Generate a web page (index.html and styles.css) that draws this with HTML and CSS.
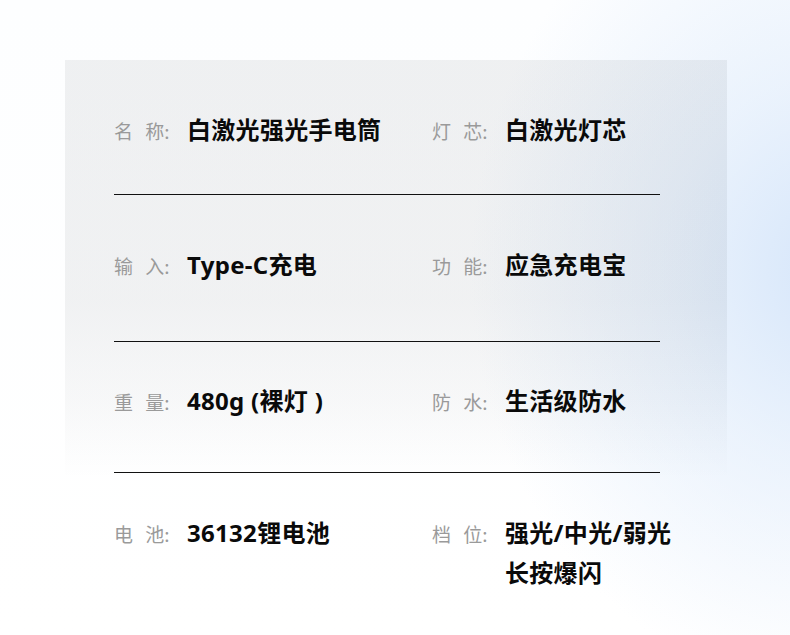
FILE: index.html
```html
<!DOCTYPE html>
<html lang="zh-CN">
<head>
<meta charset="utf-8">
<title>产品参数</title>
<link rel="stylesheet" href="styles.css">
</head>
<body>
<main class="page">
  <section class="spec-card">
    <div class="spec-row r1">
      <div class="item"><span class="key">名 称:</span><span class="val">白激光强光手电筒</span></div>
      <div class="item"><span class="key">灯 芯:</span><span class="val">白激光灯芯</span></div>
    </div>
    <div class="spec-row r2">
      <div class="item"><span class="key">输 入:</span><span class="val">Type-C充电</span></div>
      <div class="item"><span class="key">功 能:</span><span class="val">应急充电宝</span></div>
    </div>
    <div class="spec-row r3">
      <div class="item"><span class="key">重 量:</span><span class="val">480g (裸灯 )</span></div>
      <div class="item"><span class="key">防 水:</span><span class="val">生活级防水</span></div>
    </div>
    <div class="spec-row r4">
      <div class="item"><span class="key">电 池:</span><span class="val">36132锂电池</span></div>
      <div class="item"><span class="key">档 位:</span><span class="val">强光/中光/弱光<br>长按爆闪</span></div>
    </div>
  </section>
</main>
</body>
</html>
```
FILE: styles.css
```css
html, body {
  margin: 0;
  padding: 0;
}

body {
  width: 790px;
  height: 635px;
  overflow: hidden;
  background:
    radial-gradient(ellipse 360px 420px at 830px 270px, rgba(214, 230, 250, 1) 0%, rgba(222, 235, 251, 0.6) 45%, rgba(255, 255, 255, 0) 100%),
    linear-gradient(to bottom, #fdfeff 0%, #ffffff 100%);
  font-family: "Noto Sans CJK SC", sans-serif;
}

.page {
  padding: 60px 63px 0 65px;
}

.spec-card {
  width: 662px;
  height: 575px;
  box-sizing: border-box;
  padding: 0 67px 0 49px;
  background: linear-gradient(to bottom,
    rgba(20, 30, 40, 0.062) 0px,
    rgba(20, 30, 40, 0.058) 240px,
    rgba(20, 30, 40, 0.03) 340px,
    rgba(20, 30, 40, 0) 420px);
}

.spec-row {
  display: grid;
  grid-template-columns: 318px 1fr;
  line-height: 34px;
  border-bottom: 1px solid #111;
}

.r1 { padding: 53px 0 46px; }
.r2 { padding: 53px 0 58px; }
.r3 { padding: 42px 0 53px; }
.r4 { padding: 40px 0 0; line-height: 40px; border-bottom: none; }

.item {
  display: flex;
  align-items: baseline;
  white-space: nowrap;
}

.key {
  flex: none;
  width: 73px;
  font-size: 19px;
  color: #9a9a9a;
  word-spacing: 8px;
  font-family: "Noto Sans CJK SC", sans-serif;
}

.val {
  font-size: 24px;
  font-weight: 700;
  color: #0a0a0a;
  letter-spacing: 0.3px;
  font-family: "Noto Sans", "Noto Sans CJK SC", sans-serif;
}
```
